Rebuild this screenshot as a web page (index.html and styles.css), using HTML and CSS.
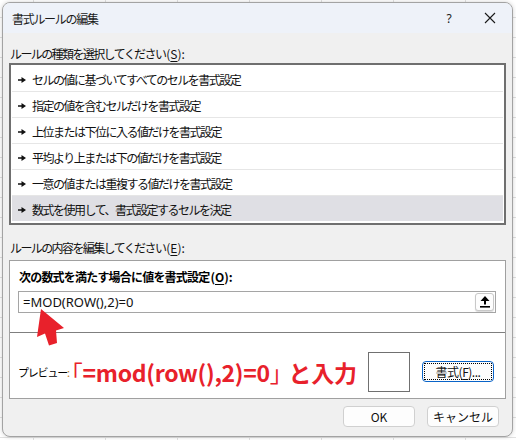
FILE: index.html
```html
<!DOCTYPE html>
<html lang="ja">
<head>
<meta charset="utf-8">
<title>書式ルールの編集</title>
<link rel="stylesheet" href="styles.css">
</head>
<body>
<div class="dialog">
  <div class="titlebar">
    <span class="title">書式ルールの編集</span>
    <span class="help">?</span>
    <span class="close"><svg width="12" height="12" viewBox="0 0 12 12"><path d="M1 1L11 11M11 1L1 11" stroke="#1a1a1a" stroke-width="1.1" fill="none"/></svg></span>
  </div>
  <div class="content">
    <div class="label lbl-type">ルールの種類を選択してください<span class="lat">(<u>S</u>):</span></div>
    <ul class="list">
      <li><svg class="bullet" width="8" height="6" viewBox="0 0 8 6"><path d="M0 2.3H4V3.7H0Z M3.5 0L8 3L3.5 6Z" fill="#111"/></svg>セルの値に基づいてすべてのセルを書式設定</li>
      <li><svg class="bullet" width="8" height="6" viewBox="0 0 8 6"><path d="M0 2.3H4V3.7H0Z M3.5 0L8 3L3.5 6Z" fill="#111"/></svg>指定の値を含むセルだけを書式設定</li>
      <li><svg class="bullet" width="8" height="6" viewBox="0 0 8 6"><path d="M0 2.3H4V3.7H0Z M3.5 0L8 3L3.5 6Z" fill="#111"/></svg>上位または下位に入る値だけを書式設定</li>
      <li><svg class="bullet" width="8" height="6" viewBox="0 0 8 6"><path d="M0 2.3H4V3.7H0Z M3.5 0L8 3L3.5 6Z" fill="#111"/></svg>平均より上または下の値だけを書式設定</li>
      <li><svg class="bullet" width="8" height="6" viewBox="0 0 8 6"><path d="M0 2.3H4V3.7H0Z M3.5 0L8 3L3.5 6Z" fill="#111"/></svg>一意の値または重複する値だけを書式設定</li>
      <li class="selected"><svg class="bullet" width="8" height="6" viewBox="0 0 8 6"><path d="M0 2.3H4V3.7H0Z M3.5 0L8 3L3.5 6Z" fill="#111"/></svg>数式を使用して、書式設定するセルを決定</li>
    </ul>
    <div class="label lbl-edit">ルールの内容を編集してください<span class="lat">(<u>E</u>):</span></div>
    <div class="panel">
      <div class="panel-top">
        <div class="bold-label">次の数式を満たす場合に値を書式設定<span class="lat">(<u>O</u>):</span></div>
        <div class="formula">
          <span class="formula-text">=MOD(ROW(),2)=0</span>
          <span class="ref-btn"><svg width="10" height="12" viewBox="0 0 10 12"><path d="M5 0L9.5 5H6V8.5H4V5H0.5Z" fill="#000"/><rect x="0" y="10" width="10" height="1.6" fill="#000"/></svg></span>
        </div>
      </div>
      <div class="panel-bottom">
        <span class="preview-label">プレビュー<span class="colon">:</span></span>
        <span class="note"><span class="open">「</span>=mod(row(),2)=0<span class="close-br">」</span>と入力</span>
        <span class="preview-box"></span>
        <button class="btn fmt"><span class="focus">書式(<u>F</u>)...</span></button>
      </div>
    </div>
    <div class="actions">
      <button class="btn">OK</button>
      <button class="btn">キャンセル</button>
    </div>
  </div>
</div>
<svg class="arrow" width="516" height="440" viewBox="0 0 516 440"><path d="M41 309L64 328L56 330.5L57 343L49 345.5L45 333.5L37 337Z" fill="#e8212b"/></svg>
</body>
</html>
```
FILE: styles.css
```css
html, body {
  margin: 0;
  padding: 0;
}
body {
  position: relative;
  width: 516px;
  height: 440px;
  overflow: hidden;
  padding: 2px 0 0 2px;
  box-sizing: border-box;
  background-color: #fff;
  background-image:
    linear-gradient(to right, #e1e1e1 1px, transparent 1px),
    linear-gradient(to bottom, #e1e1e1 1px, transparent 1px);
  background-size: 72px 20px;
  background-position: 33px 0, 0 17px;
  font-family: "Noto Sans CJK JP", "Noto Sans", sans-serif;
  color: #000;
}
.dialog {
  width: 511px;
  height: 435px;
  box-sizing: border-box;
  background: #f0f0f0;
  border: 1px solid #a3a3a3;
  border-radius: 8px;
  box-shadow: 0 0 4px rgba(0,0,0,0.18);
  display: flex;
  flex-direction: column;
  overflow: hidden;
}
.titlebar {
  height: 30px;
  flex: none;
  background: #eef2f9;
  display: flex;
  align-items: center;
  padding-left: 9px;
}
.title {
  font-size: 12px;
  letter-spacing: -1.3px;
  color: #1a1a1a;
  flex: 1;
}
.help {
  font-family: "Noto Sans", sans-serif;
  font-size: 12px;
  color: #1a1a1a;
  width: 20px;
  text-align: center;
  margin-right: 25px;
}
.close {
  width: 12px;
  height: 12px;
  display: flex;
  margin-right: 16px;
}
.content {
  flex: 1;
  padding: 12px 6px 0 6px;
  display: flex;
  flex-direction: column;
}
.label {
  font-size: 12px;
  letter-spacing: -1.6px;
  line-height: 18px;
  height: 18px;
  padding-left: 1px;
  color: #111;
}
.lat {
  letter-spacing: 0;
  margin-left: 1px;
}
.label u, .bold-label u, .fmt u { text-underline-offset: 2px; }
.list {
  list-style: none;
  margin: 0;
  padding: 1px;
  height: 162px;
  box-sizing: border-box;
  border: 2px solid #6f6f6f;
  background: #fff;
}
.list li {
  height: 26px;
  box-sizing: border-box;
  border-bottom: 1px solid #e6e6e6;
  display: flex;
  align-items: center;
  padding-left: 6px;
  padding-top: 2px;
  font-size: 12px;
  letter-spacing: -1.5px;
  color: #111;
}
.list li:last-child {
  border-bottom: none;
  height: 25px;
}
.list li.selected {
  background: #dfdfe4;
}
.bullet {
  flex: none;
  margin-right: 6px;
}
.lbl-edit {
  margin-top: 14px;
}
.panel {
  margin-top: 3px;
  height: 139px;
  box-sizing: border-box;
  border: 1px solid #a0a0a0;
  background: #fff;
  display: flex;
  flex-direction: column;
}
.panel-top {
  height: 72px;
  padding: 8px 0 0 8px;
  box-sizing: border-box;
  border-bottom: 1px solid #7f7f7f;
}
.bold-label {
  font-size: 12px;
  font-weight: bold;
  letter-spacing: -0.8px;
  line-height: 16px;
  padding-left: 1px;
}
.formula {
  margin-top: 6px;
  width: 478px;
  height: 22px;
  box-sizing: border-box;
  border: 1px solid #a5a5a5;
  display: flex;
  align-items: center;
  justify-content: space-between;
  padding: 0 1px 0 4px;
}
.formula-text {
  font-family: "Noto Sans", sans-serif;
  font-size: 13px;
  color: #111;
}
.ref-btn {
  width: 19px;
  height: 18px;
  box-sizing: border-box;
  border: 1px solid #c8c8c8;
  border-radius: 3px;
  background: #fdfdfd;
  box-shadow: 0 1px 1px rgba(0,0,0,0.15);
  display: flex;
  align-items: center;
  justify-content: center;
}
.panel-bottom {
  flex: 1;
  display: flex;
  align-items: center;
  padding: 12px 11px 0 8px;
}
.preview-label {
  flex: none;
  white-space: nowrap;
  font-size: 11px;
  letter-spacing: -1.2px;
  color: #000;
}
.colon { color: #c0802a; }
.note {
  flex: none;
  margin-left: 4px;
  font-size: 23px;
  font-weight: bold;
  color: #e8212b;
  letter-spacing: -0.3px;
  white-space: nowrap;
}
.note .open {
  font-weight: normal;
  margin-left: -13px;
}
.note .close-br {
  font-weight: normal;
  margin-right: -4px;
}
.preview-box {
  flex: none;
  margin-left: auto;
  width: 42px;
  height: 40px;
  box-sizing: border-box;
  border: 1px solid #707070;
  background: #fff;
}
.btn {
  font-family: "Noto Sans CJK JP", "Noto Sans", sans-serif;
  font-size: 12px;
  color: #111;
  width: 72px;
  height: 21px;
  box-sizing: border-box;
  padding: 0;
  background: #fdfdfd;
  border: 1px solid #d0d0d0;
  border-radius: 4px;
  display: flex;
  align-items: center;
  justify-content: center;
  flex: none;
}
.fmt {
  margin-left: 12px;
  border: 1px solid #0a64c8;
  padding: 1px;
  letter-spacing: -0.5px;
}
.fmt .focus {
  width: 100%;
  height: 100%;
  box-sizing: border-box;
  border: 1px dotted #000;
  display: flex;
  align-items: center;
  justify-content: center;
}
.actions {
  margin-top: 7px;
  display: flex;
  justify-content: flex-end;
  gap: 12px;
  padding-right: 7px;
}
.arrow {
  position: absolute;
  left: 0;
  top: 0;
  pointer-events: none;
}
```
